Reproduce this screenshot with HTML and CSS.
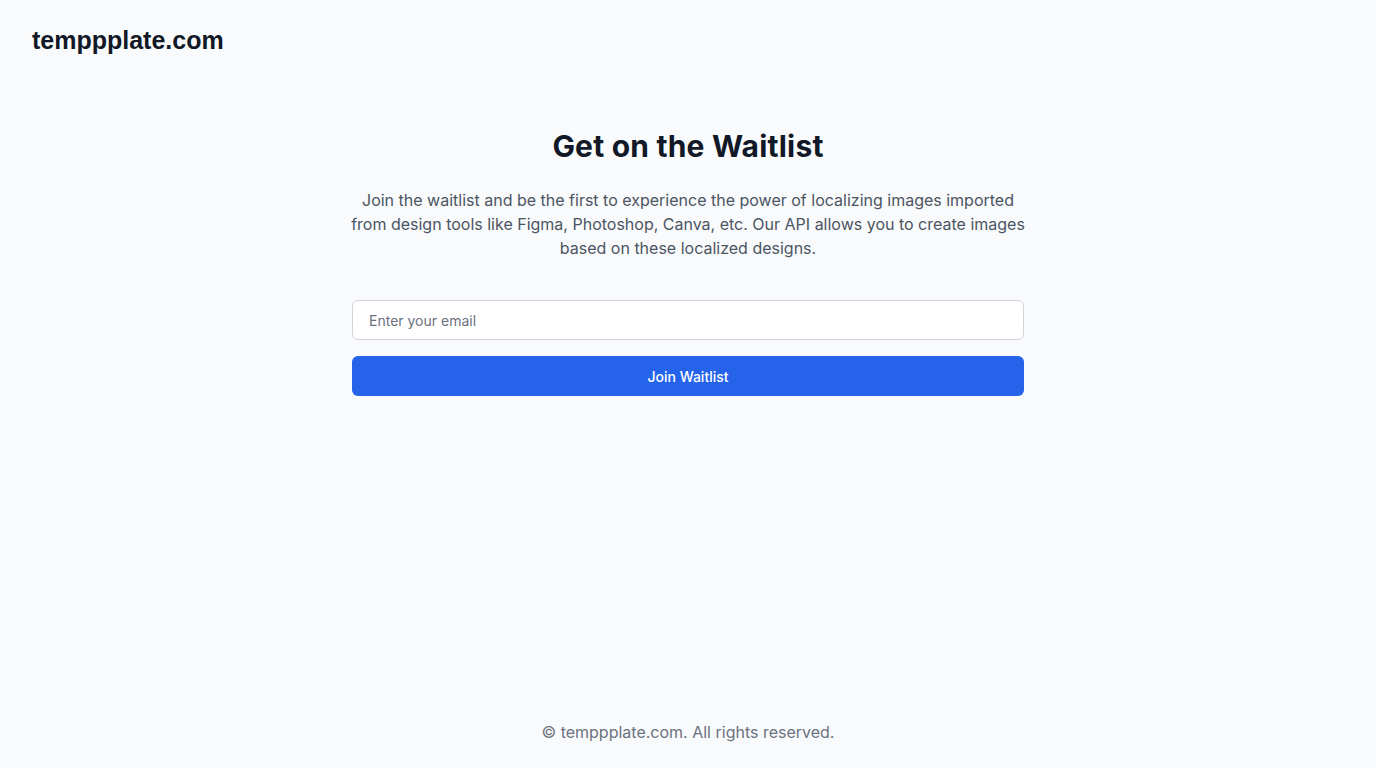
FILE: index.html
```html
<!DOCTYPE html>
<html lang="en">
<head>
<meta charset="utf-8">
<title>temppplate.com – Waitlist</title>
<link rel="stylesheet" href="styles.css">
</head>
<body>
<div class="page">
  <header class="header">
    <span class="logo">temppplate.com</span>
  </header>
  <main class="main">
    <h1 class="title">Get on the Waitlist</h1>
    <p class="lead">Join the waitlist and be the first to experience the power of localizing images imported from design tools like Figma, Photoshop, Canva, etc. Our API allows you to create images based on these localized designs.</p>
    <form class="form" onsubmit="return false;">
      <input class="email" type="email" placeholder="Enter your email">
      <button class="btn" type="submit">Join Waitlist</button>
    </form>
  </main>
  <footer class="footer">© temppplate.com. All rights reserved.</footer>
</div>
</body>
</html>
```
FILE: styles.css
```css
* { box-sizing: border-box; }
html, body { margin: 0; padding: 0; }
body {
  background: #f9fafb;
  font-family: Inter, "Noto Sans", sans-serif;
  color: #111827;
}
.page {
  min-height: 100vh;
  display: flex;
  flex-direction: column;
}
.header {
  padding: 24px 32px;
}
.logo {
  font-family: "Liberation Sans", Arial, sans-serif;
  font-weight: 700;
  font-size: 25px;
  line-height: 32px;
  color: #111827;
  display: block;
}
.main {
  flex: 1;
  width: 672px;
  margin: 48px auto 0;
  text-align: center;
}
.title {
  margin: 0 0 24px;
  font-size: 30px;
  line-height: 36px;
  font-weight: 700;
  letter-spacing: 0.2px;
  color: #111827;
}
.lead {
  margin: 0 -4px 40px;
  font-size: 16px;
  line-height: 24px;
  color: #4b5563;
}
.form {
  display: flex;
  flex-direction: column;
  gap: 16px;
}
.email {
  height: 40px;
  width: 100%;
  border: 1px solid #d1d5db;
  border-radius: 6px;
  background: #fff;
  padding: 0 16px;
  font-family: Inter, sans-serif;
  font-size: 14px;
  color: #111827;
  outline: none;
}
.email::placeholder { color: #6b7280; }
.btn {
  height: 40px;
  width: 100%;
  border: 0;
  border-radius: 6px;
  background: #2563eb;
  color: #fff;
  font-family: Inter, sans-serif;
  font-size: 14px;
  font-weight: 500;
  cursor: pointer;
}
.footer {
  padding: 24px;
  text-align: center;
  font-size: 16px;
  line-height: 24px;
  color: #6b7280;
}
```
